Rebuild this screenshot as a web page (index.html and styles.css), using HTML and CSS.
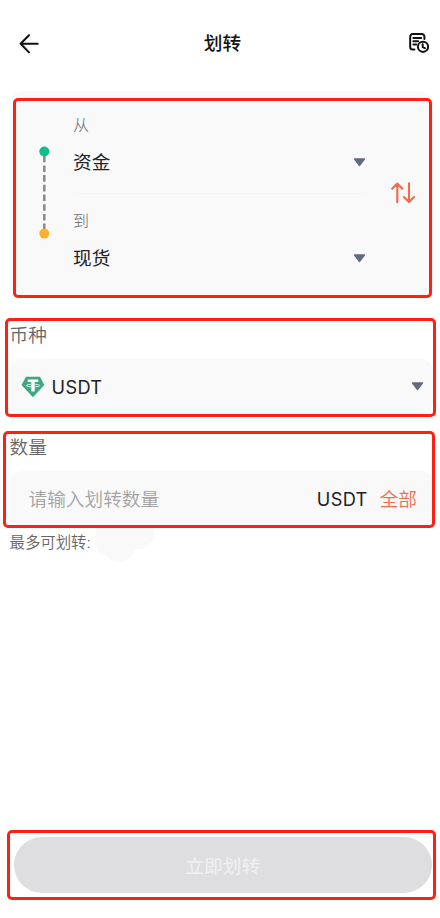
FILE: index.html
```html
<!DOCTYPE html>
<html lang="zh-CN">
<head>
<meta charset="utf-8">
<title>划转</title>
<link rel="stylesheet" href="styles.css">
</head>
<body>
<header class="topbar">
  <svg class="back" width="20" height="20" viewBox="0 0 20 20"><path d="M10 1.200 1.600 9.800l8.400 8.600M2 9.800h16.700"/></svg>
  <h1>划转</h1>
  <svg class="history" width="20" height="20" viewBox="0 0 20 20"><path d="M5.400 16.600H3.700a2.500 2.500 0 0 1-2.500-2.500V3.500A2.500 2.500 0 0 1 3.700 1h9.200a2.500 2.500 0 0 1 2.500 2.500V6M4.400 5h7.800M4.400 8.300h4.800M4.400 11.500h2.800"/><circle cx="14" cy="13.800" r="5.100"/><path d="M13.700 11.200v2.900l2.200 1.100"/></svg>
</header>
<main>
  <section class="card">
    <svg class="route" width="12" height="94" viewBox="0 0 12 94"><path d="M6.300 9.700V84" stroke-dasharray="6.600 3.100"/><circle class="start" cx="6.300" cy="5.500" r="5"/><circle class="end" cx="6.300" cy="87.600" r="5"/></svg>
    <div class="accounts">
      <div class="account">
        <span class="caption">从</span>
        <div class="choice"><span class="name">资金</span><svg class="caret" width="13" height="9" viewBox="0 0 13 9"><path d="M1.500 1h10L6.500 7.500z"/></svg></div>
      </div>
      <div class="account">
        <span class="caption">到</span>
        <div class="choice"><span class="name">现货</span><svg class="caret" width="13" height="9" viewBox="0 0 13 9"><path d="M1.500 1h10L6.500 7.500z"/></svg></div>
      </div>
    </div>
    <svg class="swap" width="24" height="22" viewBox="0 0 24 22"><path d="M6.300 20.300V2M1.200 6.700 6.300 1.600l5.100 5.100M18 1.300v18.500M12.900 15l5.100 5.100 5.100-5.100"/></svg>
    <i class="mark"></i>
  </section>
  <section class="group coin">
    <h2>币种</h2>
    <div class="field">
      <svg class="tether" width="24" height="22" viewBox="0 0 24 22"><path class="gem" d="M5 .7h14L23.300 9 12 21.300.5 9z"/><path class="tee" d="M6.700 3.400h10.600v2.700h-3.600v9.500h-3.400V6.100H6.700z"/><path class="ring" d="M9.500 8.300c-6.500.7-5.500 2.500 2.500 2.600 8-.1 9-1.900 2.500-2.600"/></svg>
      <span class="code">USDT</span>
      <svg class="caret" width="13" height="9" viewBox="0 0 13 9"><path d="M1.500 1h10L6.500 7.500z"/></svg>
    </div>
    <i class="mark"></i>
  </section>
  <section class="group amount">
    <h2>数量</h2>
    <div class="field">
      <span class="placeholder">请输入划转数量</span>
      <span class="code">USDT</span>
      <span class="all">全部</span>
    </div>
    <i class="mark"></i>
  </section>
  <div class="limit"><span>最多可划转:</span><svg width="60" height="38" viewBox="0 0 60 38"><path d="M2 1h56c2 8 1 15-4 19-4 4-9 5-14 4-3 8-8 13-15 13-6 0-10-2-13-6C4 30 1 24 1 17 0 11 1 6 2 1z"/></svg></div>
</main>
<footer><button><span>立即划转</span></button><i class="mark"></i></footer>
</body>
</html>
```

FILE: styles.css
```css
* { box-sizing: border-box; }
body {
  margin: 0;
  width: 440px;
  height: 918px;
  display: flex;
  flex-direction: column;
  background: #fff;
  color: #202124;
  font: 18.67px/28px Inter, "Noto Sans CJK SC", sans-serif;
}
svg { display: block; flex: none; fill: none; stroke-linecap: round; stroke-linejoin: round; }
h1, h2 { margin: 0; font-size: inherit; }
main { flex: 1; padding: 0 7px 0 10px; }

.topbar {
  height: 91px;
  padding: 29px 11px 0 19px;
  display: flex;
  align-items: flex-start;
  justify-content: space-between;
}
.topbar h1 { margin: 1px 3px 0 0; font-weight: 500; color: #111; }
.topbar svg { margin-top: 5px; stroke: #111; stroke-width: 2; }
.topbar .history { margin-top: 4px; }

.mark {
  position: absolute;
  border: 3px solid #ff2013;
  border-radius: 5px;
  pointer-events: none;
}

.card {
  position: relative;
  height: 206px;
  padding: 20px 18px 0 28px;
  display: flex;
  background: #f9f9f9;
  border-radius: 14px 14px 4px 4px;
}
.card .mark { inset: 7px 1px -.5px 3px; }
.route { margin-top: 35px; }
.route path { stroke: #8c8c8c; stroke-width: 2.6; stroke-linecap: butt; }
.route .start { fill: #0fbf8a; }
.route .end { fill: #fbb32b; }
.accounts { width: 293px; margin-left: 23px; }
.account { height: 96px; }
.account + .account { border-top: 1px solid #f5f5f5; margin-top: -14px; padding-top: 13px; height: 110px; }
.caption { display: block; font-size: 16px; font-weight: 300; color: #666; }
.choice { display: flex; align-items: flex-start; justify-content: space-between; height: 28px; margin-top: 9px; }
.name { padding-top: 1px; }
.choice .caret { margin-top: 10px; }
.caret { fill: #626b7c; stroke: #626b7c; stroke-width: 1.3; }
.swap { margin: 71px 0 0 25px; stroke: #f4694a; stroke-width: 2.1; }

.group { position: relative; }
.group h2 { margin-left: -.5px; padding-top: 1px; height: 28px; font-weight: 350; color: #666; }
.field { display: flex; align-items: center; height: 55px; margin-top: 10px; background: #f9f9f9; border-radius: 12px; }
.coin { margin-top: 24px; }
.coin .field { padding: 0 9px 0 11px; }
.coin .caret { margin-left: auto; }
.coin .mark { inset: -3px -3px -3px -5px; }
.tether { margin-right: 6.5px; }
.gem { fill: #3ca784; }
.tee { fill: #fff; }
.ring { stroke: #fff; stroke-width: .8; }
.code { font-size: 18.2px; letter-spacing: .35px; }

.amount { margin-top: 19px; }
.amount .field { padding: 0 16px 0 18.500px; }
.amount .mark { inset: -2px -2px -2px -7px; }
.placeholder { flex: 1; padding-top: 2px; color: #a3a3a3; font-weight: 350; }
.all { margin-left: 12px; padding-top: 2px; color: #f06e4a; font-weight: 350; }

.limit { display: flex; margin-left: -.5px; color: #666; font-size: 15.4px; font-weight: 350; line-height: 33px; }
.limit svg { margin: -1px 0 0 4.500px; fill: #f9f9f9; }

footer { position: relative; height: 81px; padding: 0 8.500px 0 14px; }
footer button {
  display: block;
  width: 100%;
  height: 56px;
  padding: 3px 0 0;
  border: 0;
  border-radius: 28px;
  background: #dedee0;
  color: #f1f1f2;
  font: inherit;
}
footer .mark { inset: -7px 4px 18px 6.500px; }
```
